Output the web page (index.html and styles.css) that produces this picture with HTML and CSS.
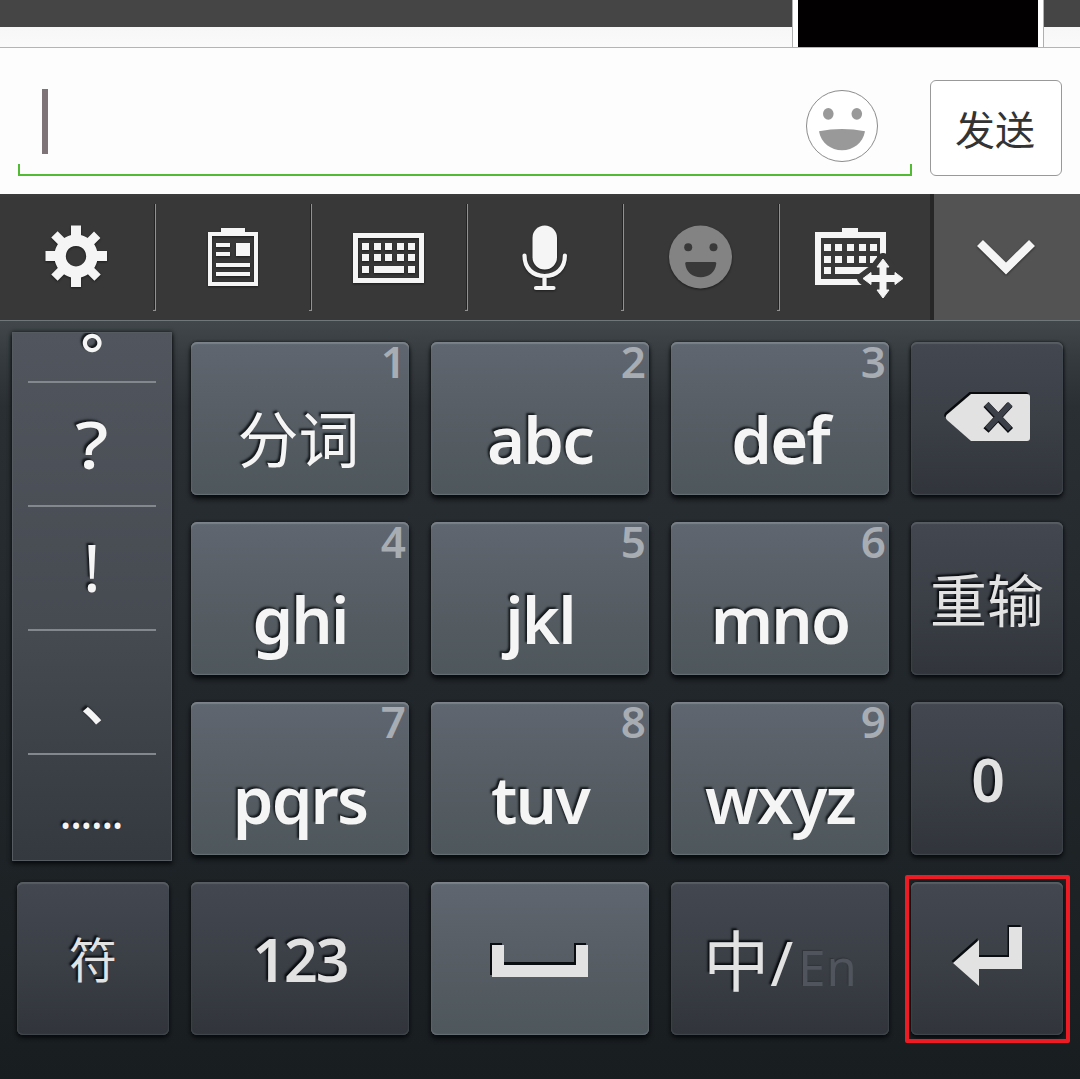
FILE: index.html
```html
<!DOCTYPE html>
<html lang="zh-CN">
<head>
<meta charset="utf-8">
<title>键盘</title>
<link rel="stylesheet" href="styles.css">
</head>
<body>
<main class="screen">
  <section class="chat">
    <div class="photo"></div>
  </section>

  <section class="composer">
    <div class="field">
      <span class="caret"></span>
      <svg class="smile" viewBox="805 89 74 74">
        <circle cx="842" cy="126" r="35.5" fill="#fff" stroke="#8c8c8c"/>
        <ellipse cx="828.3" cy="113.8" rx="5.3" ry="5.9" fill="#999"/>
        <ellipse cx="856.8" cy="113.8" rx="5.3" ry="5.9" fill="#999"/>
        <path d="M819 131.300Q842 126.800 865 131.300C863 143 853 150.300 842 150.300S821 143 819 131.300Z" fill="#999"/>
      </svg>
    </div>
    <button class="send">发送</button>
  </section>

  <nav class="toolbar">
    <div class="tool">
      <svg viewBox="0 194 155 126">
        <g fill="#f5f5f5">
          <path fill-rule="evenodd" d="M76 234.500a21.700 21.700 0 1 0 .01 0ZM76 246a10.200 10.200 0 1 1-.01 0Z"/>
          <path d="M71 225.500h10v12h-10zM71 275h10v12h-10zM45.500 251h12v10h-12zM95 251h12v10h-12z"/>
          <path transform="rotate(45 76 256)" d="M71.500 226h9v12h-9zM71.500 274.500h9v12h-9zM45.500 251.500h12v9h-12zM94.500 251.500h12v9h-12z"/>
        </g>
      </svg>
    </div>
    <div class="tool">
      <svg viewBox="156 194 155 126">
        <path fill="#f5f5f5" fill-rule="evenodd" d="M221 228h24v4h13v54h-50v-54h13zM212 236v46h42v-46z"/>
        <path fill="#f5f5f5" d="M216 243h14v4h-14zM216 252h14v4h-14zM236 243h14v13h-14zM216 263h34v4h-34zM216 272h34v4h-34z"/>
      </svg>
    </div>
    <div class="tool">
      <svg viewBox="312 194 155 126">
        <path fill="#f5f5f5" fill-rule="evenodd" d="M353 233h71v50h-71zM358 238v40h61v-40z"/>
        <path fill="#f5f5f5" d="M362 243h7v7h-7zM374 243h7v7h-7zM385 243h7v7h-7zM397 243h7v7h-7zM408 243h7v7h-7zM362 254h7v7h-7zM374 254h7v7h-7zM385 254h7v7h-7zM397 254h7v7h-7zM408 254h7v7h-7zM362 266h7v7h-7zM374 266h30v7h-30zM408 266h7v7h-7z"/>
      </svg>
    </div>
    <div class="tool">
      <svg viewBox="468 194 155 126">
        <rect x="532.500" y="225.500" width="24.500" height="44" rx="12.200" fill="#f5f5f5"/>
        <path d="M524.500 255.500c0 13 8.500 20.500 20.200 20.500s20.200-7.500 20.200-20.500M544.500 276v12M536 288h17.500" fill="none" stroke="#f5f5f5" stroke-width="4.200" stroke-linecap="round"/>
      </svg>
    </div>
    <div class="tool">
      <svg viewBox="624 194 155 126">
        <circle cx="700.500" cy="257" r="31.500" fill="#838383"/>
        <g fill="#393939">
          <circle cx="688.200" cy="247.300" r="4"/><circle cx="713.500" cy="247.300" r="4"/>
          <path d="M686.500 262h28.500q1.500 0 1.300 1.500c-1 9-7.500 13.700-15.600 13.700s-14.500-4.700-15.500-13.700q-.2-1.500 1.300-1.500Z"/>
        </g>
      </svg>
    </div>
    <div class="tool tool-last">
      <svg viewBox="780 194 149 126">
        <path fill="#f5f5f5" fill-rule="evenodd" d="M842 228h16v4h28v53h-71v-53h27zM821 238v41h59v-41z"/>
        <path fill="#f5f5f5" d="M824 244h7v7h-7zM835 244h7v7h-7zM847 244h7v7h-7zM859 244h7v7h-7zM870 244h7v7h-7zM824 256h7v7h-7zM835 256h7v7h-7zM847 256h7v7h-7zM859 256h7v7h-7zM870 256h7v7h-7zM824 267h7v7h-7zM835 267h36v7h-36z"/>
        <path d="M883 259l6 8h-3v8.500h9v-3l8 6-8 6v-3h-9v8.500h3l-6 8-6-8h3v-8.500h-9v3l-8-6 8-6v3h9v-8.500h-3z" fill="#383838" stroke="#383838" stroke-width="12" stroke-linejoin="round" clip-path="inset(0 14px 14px 0)"/>
        <path d="M883 259l6 8h-3v8.500h9v-3l8 6-8 6v-3h-9v8.500h3l-6 8-6-8h3v-8.500h-9v3l-8-6 8-6v3h9v-8.500h-3z" fill="#f5f5f5" stroke="#f5f5f5" stroke-linejoin="round"/>
      </svg>
    </div>
    <div class="tool tool-hide">
      <svg viewBox="934 194 146 126">
        <path d="M980 243L1006 268.500L1032 243" fill="none" stroke="#f5f5f5" stroke-width="8.500"/>
      </svg>
    </div>
  </nav>

  <section class="keyboard">
    <div class="symbols">
      <div class="symbol symbol-first"><span class="circle">。</span></div>
      <div class="symbol"><span class="mark-wide">?</span></div>
      <div class="symbol"><span class="bang">!</span></div>
      <div class="symbol"><span class="comma">、</span></div>
      <div class="symbol symbol-last"><span class="dots">......</span></div>
    </div>

    <div class="key letters cjk"><span class="hint">1</span>分词</div>
    <div class="key letters"><span class="hint">2</span>abc</div>
    <div class="key letters"><span class="hint">3</span>def</div>
    <div class="key side">
      <svg viewBox="911 342 152 153">
        <path transform="translate(-1.500 -2)" fill="#080a0c" d="M971 394h56q3 0 3 3v41q0 3-3 3h-56l-24-21q-2.500-3 0-5.500z"/>
        <path fill="#e2e2e2" d="M971 394h56q3 0 3 3v41q0 3-3 3h-56l-24-21q-2.500-3 0-5.500z"/>
        <path d="M986 404.500l24.500 26M1010 404.500l-24 26" stroke="#0b0d10" stroke-width="7"/>
        <path d="M986.500 404l23.500 25M1010.500 404l-23.500 25" stroke="#3c4048" stroke-width="5.500"/>
      </svg>
    </div>

    <div class="key letters"><span class="hint">4</span>ghi</div>
    <div class="key letters"><span class="hint">5</span>jkl</div>
    <div class="key letters"><span class="hint">6</span>mno</div>
    <div class="key side cjk retype">重输</div>

    <div class="key letters"><span class="hint">7</span>pqrs</div>
    <div class="key letters"><span class="hint">8</span>tuv</div>
    <div class="key letters"><span class="hint">9</span>wxyz</div>
    <div class="key side">0</div>

    <div class="key side cjk mark">符</div>
    <div class="key side">123</div>
    <div class="key letters space">
      <svg viewBox="431 882 218 153">
        <path d="M490 943h12v19h72v-19h12v32h-96z" fill="#0b0e10"/>
        <path d="M492 945h12v20h72v-20h12v32h-96z" fill="#e2e2e2"/>
      </svg>
    </div>
    <div class="key side lang"><span class="zh">中</span><span class="slash">/</span><span class="en">En</span></div>
    <div class="key side enter">
      <svg viewBox="911 882 152 153">
        <path transform="translate(-1.500 -2)" d="M1009 927h13v42h-43v17l-26-23 26-23v17h30z" fill="#0b0e10"/>
        <path d="M1009 927h13v42h-43v17l-26-23 26-23v17h30z" fill="#e2e2e2"/>
      </svg>
      <span class="highlight"></span>
    </div>
  </section>
</main>
</body>
</html>
```
FILE: styles.css
```css
* { box-sizing: border-box; }

body {
  margin: 0;
  font-family: "Noto Sans", "Noto Sans CJK SC", sans-serif;
}

svg { display: block; }

.screen {
  width: 1080px;
  height: 1079px;
  overflow: hidden;
  display: flex;
  flex-direction: column;
}

.chat {
  height: 48px;
  border-bottom: 1px solid #b4b4b4;
  background: linear-gradient(#454545 27px, #f7f7f7 27px, #fafafa);
  display: flex;
  justify-content: flex-end;
  padding-right: 36px;
}

.photo {
  width: 252px;
  border: solid #b0b0b0;
  border-width: 0 1px;
  padding: 0 5px;
  background: linear-gradient(#020001, #020001) content-box, #fff;
}

.composer {
  height: 146px;
  background: #fdfdfd;
  display: flex;
  gap: 18px;
  padding: 32px 18px 18px;
}

.field {
  flex: 1;
  display: flex;
  justify-content: space-between;
  align-items: flex-start;
  padding: 9px 33px 0 24px;
  background:
    linear-gradient(#52bb36, #52bb36) left bottom / 100% 2px no-repeat,
    linear-gradient(#52bb36, #52bb36) left bottom / 2px 12px no-repeat,
    linear-gradient(#52bb36, #52bb36) right bottom / 2px 12px no-repeat;
}

.caret {
  width: 6px;
  height: 65px;
  background: #7e7478;
}

.smile {
  width: 74px;
  height: 74px;
}

.send {
  width: 132px;
  padding: 0 2px 0 0;
  border: 1px solid #999;
  border-radius: 6px;
  background: #fff;
  color: #333;
  font: 400 40px "Noto Sans CJK SC", sans-serif;
}

.toolbar {
  height: 126px;
  display: flex;
  background: linear-gradient(#3c3c3c, #383838 4px);
}

.tool {
  width: 156px;
  background:
    linear-gradient(#919191, #919191) right 10px / 1px 107px no-repeat,
    linear-gradient(#222, #222) 154px 10px / 1px 105px no-repeat,
    linear-gradient(#919191, #919191) right 116px / 3px 1px no-repeat;
}

.tool svg {
  width: 155px;
  height: 126px;
  filter: drop-shadow(0 1px 1px rgba(0, 0, 0, .5));
}

.tool-last {
  width: 154px;
  background: none;
  border-right: 4px solid #272727;
}

.tool-last svg {
  width: 149px;
  filter: none;
}

.tool-hide {
  width: 146px;
  background: #535353;
}

.tool-hide svg { width: 146px; }

.keyboard {
  height: 759px;
  border-top: 1px solid #70777a;
  padding: 21px 17px 0 11px;
  background: linear-gradient(#41474a, #353b3e 35px, #2a2f33 85px, #22272b 360px, #1b2023 660px, #181d20);
  display: grid;
  grid-template-columns: 158px 218px 218px 218px 152px;
  grid-auto-rows: 153px;
  gap: 27px 22px;
}

.symbols {
  grid-row: span 3;
  width: 160px;
  height: 529px;
  margin: -10px 0 0 1px;
  padding: 0 15px;
  overflow: hidden;
  background: linear-gradient(#51565e, #464a51 55%, #34393f);
  border: 1px solid #555b61;
  box-shadow: 0 3px 4px #0a0d0f, 0 0 4px #14181b;
}

.symbol {
  height: 124px;
  border-bottom: 2px solid #83888f;
  display: flex;
  align-items: center;
  justify-content: center;
  color: #f5f5f5;
  font-size: 66px;
  line-height: 1;
  text-shadow: -2px -2px 2px #14171a;
}

.symbol-first { height: 50px; }

.symbol-last { border-bottom: 0; }

.circle,
.comma {
  font-family: "Noto Sans CJK TC", sans-serif;
  font-size: 60px;
}

.circle {
  margin-top: -34px;
  font-size: 58px;
  font-weight: 700;
}

.comma {
  margin-top: 40px;
  font-weight: 500;
}

.mark-wide {
  margin-top: -3px;
  font-weight: 500;
  transform: scaleX(1.12);
}

.bang {
  margin-top: -4px;
}

.dots {
  font-size: 47px;
  letter-spacing: -2.200px;
  margin: -11px 0 0 -3px;
}

.key {
  position: relative;
  display: flex;
  align-items: center;
  justify-content: center;
  border-radius: 6px;
  font-size: 59px;
  font-weight: 600;
  line-height: 1;
}

.letters {
  padding-top: 41px;
  color: #f5f5f5;
  font-size: 65px;
  letter-spacing: -1.800px;
  background: linear-gradient(#5f6670, #585f66 40%, #4e575c);
  box-shadow: inset 0 2px 1px #7b8289, inset 0 -1px 1px #677075, inset 0 0 2px #687077, 0 4px 5px #080b0d, 0 0 3px #111518;
  text-shadow: -2px -2px 2px rgba(10, 14, 17, .85);
}

.side {
  padding-top: 2px;
  color: #e2e2e2;
  letter-spacing: -2px;
  background: linear-gradient(#434750, #3b3f46 50%, #31353b);
  box-shadow: inset 0 2px 1px #585d63, inset 0 -1px 1px #42484d, inset 0 0 2px #484d53, 0 3px 4px #080b0d, 0 0 3px #111518;
  text-shadow: -2px -2px 2px #090c0f;
}

.cjk {
  font-family: "Noto Sans CJK SC", sans-serif;
  font-size: 61px;
  font-weight: 400;
  letter-spacing: 0;
}

.letters.cjk {
  padding: 36px 3px 0 0;
}

.hint {
  position: absolute;
  top: -3px;
  right: 3px;
  color: #a8adb3;
  font: 600 44px/45px "Noto Sans", sans-serif;
  letter-spacing: 0;
  text-shadow: none;
}

.side.cjk { padding-top: 0; }

.retype {
  font-size: 57px;
  padding-bottom: 2px;
}

.mark {
  width: 152px;
  margin-left: 6px;
  padding-bottom: 4px;
  font-size: 48px;
}

.key.space,
.key.enter { padding: 0; }

.key svg {
  width: 100%;
  height: 153px;
}

.side > svg { margin-top: -2px; }
.enter > svg { margin-top: 0; }

.lang {
  font-weight: 400;
  align-items: baseline;
  padding: 42px 0 0 1px;
}

.zh {
  font: 400 66px/1 "Noto Sans CJK SC", sans-serif;
}

.slash {
  font-size: 62px;
  margin-left: 3px;
}

.en {
  color: #50545c;
  font-size: 49px;
  letter-spacing: 1px;
  margin-left: 7px;
  text-shadow: -1px -1px 1px #30343a;
}

.highlight {
  position: absolute;
  inset: -7px -7px -8px -6px;
  border: 4px solid #ed1c24;
  border-radius: 2px;
}
```
